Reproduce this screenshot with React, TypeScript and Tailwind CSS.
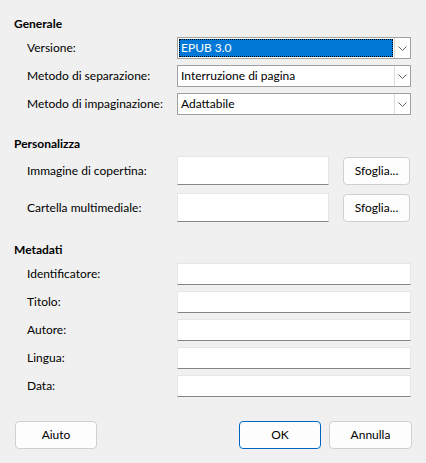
import React from 'react';

const font = { fontFamily: 'Lato, "Segoe UI", sans-serif' };

const Chevron: React.FC = () => (
  <svg width="9" height="5" viewBox="0 0 9 5" className="text-[#606060]">
    <path d="M0.5 0.5 L4.5 4.5 L8.5 0.5" fill="none" stroke="currentColor" strokeWidth="1" />
  </svg>
);

interface ComboProps {
  value: string;
  selected?: boolean;
}

const Combo: React.FC<ComboProps> = ({ value, selected }) => (
  <div className="flex h-[22px] w-[234px] shrink-0 border border-[#a0a0a0] bg-white">
    <div className="flex flex-1 p-px">
      <div
        className={
          selected
            ? 'flex flex-1 items-center border border-dotted border-black bg-[#0078d7] pl-px text-white'
            : 'flex flex-1 items-center pl-[2px] text-black'
        }
      >
        {value}
      </div>
    </div>
    <div className="flex w-[16px] items-center justify-center border-l border-[#dcdcdc]">
      <Chevron />
    </div>
  </div>
);

const Field: React.FC<{ className: string }> = ({ className }) => (
  <div
    className={`${className} shrink-0 border border-b-[#868686] border-x-[#e6e6e6] border-t-[#e6e6e6] bg-white`}
  />
);

const Button: React.FC<{ label: string; className: string; primary?: boolean }> = ({
  label,
  className,
  primary,
}) => (
  <div
    className={`${className} flex shrink-0 items-center justify-center rounded-[4px] border bg-[#fdfdfd] text-black ${
      primary ? 'border-[#0067c0]' : 'border-[#d0d0d0]'
    }`}
  >
    {label}
  </div>
);

const Heading: React.FC<{ text: string; className?: string }> = ({ text, className }) => (
  <div className={`h-[16px] leading-[16px] font-bold ${className ?? ''}`}>{text}</div>
);

const Row: React.FC<{ label: string; children: React.ReactNode; className?: string }> = ({
  label,
  children,
  className,
}) => (
  <div className={`flex items-center ${className ?? ''}`}>
    <div className="w-[163px] shrink-0 whitespace-nowrap pl-[13px] leading-[16px]">{label}</div>
    {children}
  </div>
);

const App: React.FC = () => {
  const meta = ['Identificatore:', 'Titolo:', 'Autore:', 'Lingua:', 'Data:'];

  return (
    <div
      className="flex h-[463px] w-[426px] flex-col bg-[#f0f0f0] pl-[14px] pt-[16px] text-[12px] text-black"
      style={font}
    >
      <Heading text="Generale" />
      <div className="mt-[5px] flex flex-col gap-[6px]">
        <Row label="Versione:">
          <Combo value="EPUB 3.0" selected />
        </Row>
        <Row label="Metodo di separazione:">
          <Combo value="Interruzione di pagina" />
        </Row>
        <Row label="Metodo di impaginazione:">
          <Combo value="Adattabile" />
        </Row>
      </div>

      <Heading text="Personalizza" className="mt-[21px]" />
      <div className="mt-[4px] flex flex-col gap-[8px]">
        {['Immagine di copertina:', 'Cartella multimediale:'].map((l) => (
          <Row key={l} label={l}>
            <Field className="h-[29px] w-[152px]" />
            <Button label="Sfoglia..." className="ml-[14px] h-[28px] w-[67px]" />
          </Row>
        ))}
      </div>

      <Heading text="Metadati" className="mt-[20px]" />
      <div className="mt-[5px] flex flex-col gap-[6px]">
        {meta.map((l) => (
          <Row key={l} label={l}>
            <Field className="h-[22px] w-[234px]" />
          </Row>
        ))}
      </div>

      <div className="mt-[24px] flex items-center pr-[14px]">
        <Button label="Aiuto" className="ml-px h-[28px] w-[82px]" />
        <div className="flex-1" />
        <Button label="OK" className="h-[28px] w-[82px]" primary />
        <Button label="Annulla" className="ml-[8px] h-[28px] w-[83px]" />
      </div>
    </div>
  );
};

export default App;
